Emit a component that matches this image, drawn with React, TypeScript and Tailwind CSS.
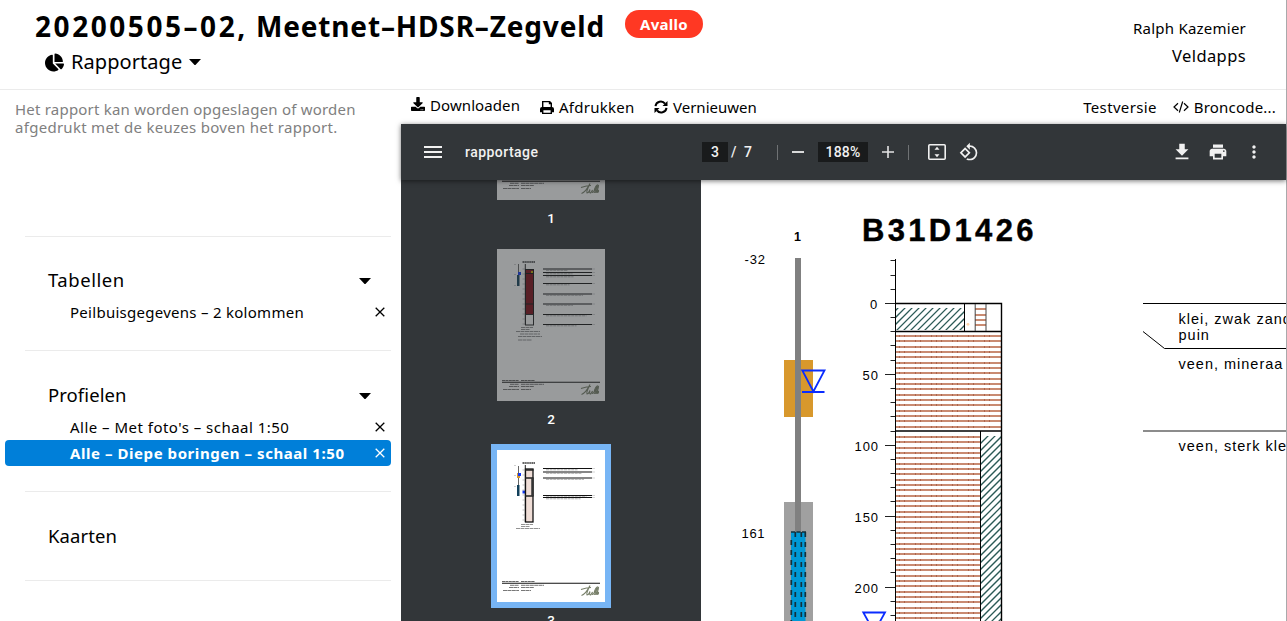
import React from "react";
import { FaChartPie, FaDownload } from "react-icons/fa";
import { MdFileDownload, MdPrint, MdMoreVert, MdRotate90DegreesCcw, MdMenu } from "react-icons/md";

const range = (n: number) => Array.from({ length: n }, (_, i) => i);

function PrintIcon() {
  return (
    <svg viewBox="0 0 14 13" className="h-[13px] w-[14px]" fill="currentColor">
      <path
        fillRule="evenodd"
        d="M2 0h8l2 2v4a2 2 0 0 1 2 2v3.3h-2V13H2v-1.700H0V8a2 2 0 0 1 2-2zM3.400 1.300V6h7.200V3.300H8.800V1.300zM3.400 9.300v2.400h7.200V9.300z"
      />
    </svg>
  );
}

function RefreshIcon() {
  return (
    <svg viewBox="0 0 14 14" className="h-[14px] w-[14px]" fill="none" stroke="currentColor" strokeWidth="2">
      <path d="M1.500 6.200A5.300 5.300 0 0 1 11 3.700" />
      <path d="M12.500 7.800A5.300 5.300 0 0 1 3 10.300" />
      <path d="M13.500 1v5h-5zM.5 13V8h5z" fill="currentColor" stroke="none" />
    </svg>
  );
}

function CodeIcon() {
  return (
    <svg viewBox="0 0 16 12" className="h-[12px] w-[16px]" fill="none" stroke="currentColor" strokeWidth="1.200">
      <path d="M5 2.200 1 6l4 3.800M11 2.200 15 6l-4 3.800M9.700.500 6.300 11.500" />
    </svg>
  );
}

function CloseIcon() {
  return (
    <svg viewBox="0 0 10 10" className="h-[10px] w-[10px]" fill="none" stroke="currentColor" strokeWidth="1.300">
      <path d="M.7.7l8.600 8.600M9.300.7.7 9.300" />
    </svg>
  );
}

function Caret() {
  return (
    <svg viewBox="0 0 12 6" className="h-[6px] w-[12px]" fill="currentColor">
      <path d="M0 0h12L6.700 5.700a1 1 0 0 1-1.400 0z" />
    </svg>
  );
}

function Header() {
  return (
    <header className="flex h-[90px] shrink-0 justify-between border-b border-[#ebebeb] pr-[40px]">
      <div className="pl-[35px]">
        <div className="flex items-start">
          <h1 className="mt-[6px] h-[40px] w-[590px] whitespace-nowrap text-[28px] font-bold leading-[40px]">
            <span className="tracking-[2.550px]">20200505–02,</span>
            <span className="tracking-[0.850px]"> Meetnet–HDSR–Zegveld</span>
          </h1>
          <span className="mt-[10px] flex h-[28px] w-[78px] items-center justify-center rounded-full bg-[#ff3823] text-[15px] font-bold tracking-[0.300px] text-white">
            Avallo
          </span>
        </div>
        <div className="flex h-[32px] items-center pl-[10px]">
          <FaChartPie className="h-[19px] w-[19px]" />
          <span className="ml-[7px] text-[20px] leading-[32px] tracking-[0.060px]">Rapportage</span>
          <span className="ml-[7px] flex"><Caret /></span>
        </div>
      </div>
      <div className="pt-[15px] text-right">
        <div className="text-[15px] leading-[27px] tracking-[0.230px]">Ralph Kazemier</div>
        <div className="text-[16.500px] leading-[28px] tracking-[0.400px]">Veldapps</div>
      </div>
    </header>
  );
}

function Sidebar() {
  return (
    <aside className="flex w-[401px] shrink-0 flex-col">
      <div className="h-[146px] pl-[15px] pt-[10px] text-[15px] leading-[18px] text-[#808080]">
        <p className="whitespace-nowrap tracking-[0.210px]">Het rapport kan worden opgeslagen of worden</p>
        <p className="whitespace-nowrap tracking-[0.280px]">afgedrukt met de keuzes boven het rapport.</p>
      </div>
      <section className="ml-[25px] mr-[10px] h-[114px] border-t border-[#ebebeb] pt-[28px]">
        <div className="flex h-[30px] items-center justify-between pl-[23px] pr-[20px]">
          <h2 className="text-[18.500px] tracking-[0.550px]">Tabellen</h2>
          <span className="mt-[2px]"><Caret /></span>
        </div>
        <div className="mt-[4px] flex h-[26px] items-center justify-between pl-[45px] pr-[6px] text-[15px] tracking-[0.275px]">
          <span>Peilbuisgegevens – 2 kolommen</span>
          <CloseIcon />
        </div>
      </section>
      <section className="ml-[5px] mr-[10px] h-[141px]">
        <div className="ml-[20px] h-[30px] border-t border-[#ebebeb]" />
        <div className="flex h-[30px] items-center justify-between pl-[43px] pr-[20px]">
          <h2 className="text-[18.500px] tracking-[0.070px]">Profielen</h2>
          <span className="mt-[2px]"><Caret /></span>
        </div>
        <div className="mt-[4px] flex h-[26px] items-center justify-between pl-[65px] pr-[6px] text-[15px] tracking-[0.480px]">
          <span>Alle – Met foto's – schaal 1:50</span>
          <CloseIcon />
        </div>
        <div className="flex h-[26px] items-center justify-between rounded-[4px] bg-[#007fd9] pl-[65px] pr-[6px] text-[15px] font-bold tracking-[0.560px] text-white">
          <span>Alle – Diepe boringen – schaal 1:50</span>
          <CloseIcon />
        </div>
      </section>
      <section className="ml-[25px] mr-[10px] h-[90px] border-y border-[#ebebeb] pl-[23px] pt-[29px]">
        <h2 className="text-[18.500px] leading-[30px] tracking-[0.100px]">Kaarten</h2>
      </section>
    </aside>
  );
}

function ReportToolbar() {
  return (
    <div className="flex h-[34px] shrink-0 items-center pl-[10px] pr-[10px] text-[15px] leading-[20px]">
      <span className="mb-[4px] flex w-[129px] items-center gap-[5px] tracking-[0.090px]">
        <FaDownload className="mb-[3px] h-[14px] w-[14px]" />Downloaden
      </span>
      <span className="flex w-[114px] items-center gap-[5px] tracking-[0.250px]"><PrintIcon />Afdrukken</span>
      <span className="flex items-center gap-[5px]"><RefreshIcon />Vernieuwen</span>
      <span className="ml-auto tracking-[0.350px]">Testversie</span>
      <span className="ml-[16px] flex items-center gap-[5px] tracking-[0.200px]"><CodeIcon />Broncode...</span>
    </div>
  );
}

function PdfBar() {
  return (
    <div className="z-10 flex h-[56px] shrink-0 items-center bg-[#323639] font-[Roboto,sans-serif] text-[14px] font-medium text-[#f1f1f1] shadow-[0_1px_5px_rgba(0,0,0,0.55)]">
      <MdMenu className="ml-[20px] h-[24px] w-[24px] text-[#f1f1f1]" />
      <span className="ml-[20px] w-[237px] tracking-[0.450px]">rapportage</span>
      <span className="flex h-[20px] w-[26px] items-center justify-center bg-[#191b1c]">3</span>
      <span className="ml-[3px] w-[13px]">/</span>
      <span className="w-[33px]">7</span>
      <span className="h-[15px] w-px bg-[#6f7274]" />
      <span className="ml-[14px] h-[2px] w-[12px] bg-[#d8d9d9]" />
      <span className="ml-[14px] flex h-[20px] w-[50px] items-center justify-center bg-[#191b1c] tracking-[0.200px]">188%</span>
      <svg viewBox="0 0 12 12" className="ml-[14px] h-[12px] w-[12px]" fill="#e4e4e4"><path d="M5.200 0h1.600v5.200H12v1.600H6.800V12H5.200V6.800H0V5.200h5.200z" /></svg>
      <span className="ml-[14px] h-[15px] w-px bg-[#6f7274]" />
      <svg viewBox="0 0 18 16" className="ml-[19px] h-[16px] w-[18px]" fill="#f1f1f1">
        <rect x=".8" y=".8" width="16.400" height="14.400" rx="1" fill="none" stroke="#f1f1f1" strokeWidth="1.600" />
        <path d="M9 2.800l2.500 3H6.500zM9 13.200l2.500-3H6.500z" />
      </svg>
      <MdRotate90DegreesCcw className="ml-[13px] h-[20px] w-[20px]" />
      <MdFileDownload className="ml-auto h-[22px] w-[22px]" />
      <MdPrint className="ml-[15px] h-[20px] w-[20px]" />
      <MdMoreVert className="ml-[16px] mr-[22px] h-[20px] w-[20px]" />
    </div>
  );
}

const SMALL_LINES = [
  [21, 78.5, 12], [21, 80.5, 9], [16, 82.5, 24], [20, 85, 20], [18, 87.5, 24], [18, 91, 14],
];

function Thumb({ active, variant }: { active?: boolean; variant: "log" | "core" }) {
  const isLog = variant === "log";
  const rows = isLog ? [20, 23.5, 26.5, 34.5, 45, 55, 65.5, 75.5] : [18.5, 22, 28, 45.5, 47.5];
  return (
    <div className={active ? "bg-[#77b5f5] p-[6px]" : "p-[6px]"}>
      <svg viewBox="0 0 108 152" className={active ? "h-[152px] w-[108px]" : "h-[152px] w-[108px] opacity-50"}>
        <rect width="108" height="152" fill="#fff" />
        <path d="M25.500 13h12.500" stroke="#333" strokeWidth="1.600" strokeDasharray="1.500 .4" />
        <path d={isLog ? "M21.500 15v22" : "M21.500 16v30"} stroke="#666" />
        <path d="M17 15.500h2M17 25.500h2M17 36.500h2" stroke="#bbb" strokeWidth=".7" />
        {!isLog && <rect x="20" y="23" width="3" height="5" fill="#d8982c" />}
        <rect x="21" y="23" width="3" height="3" fill="#1238f0" />
        <rect x="20" y={isLog ? 26 : 35} width="2.500" height="11" fill="#12405a" />
        {!isLog && <rect x="25.500" y="40.500" width="3" height="3" fill="#1238f0" />}
        <path d={isLog ? "M28.300 15v61" : "M28.300 15v57"} stroke="#222" />
        {isLog ? (
          <>
            <rect x="28.500" y="20.500" width="8" height="45" fill="#7e0a14" stroke="#111" />
            <rect x="34" y="22" width="2" height="2" fill="#c2b000" />
            <path d="M28 20.500h8.500M28 24.500h8.500M28 55h8.500" stroke="#111" />
            <rect x="28.500" y="65.500" width="8" height="10.500" fill="#fff" stroke="#222" />
          </>
        ) : (
          <>
            <rect x="28.500" y="19" width="7.500" height="53" fill="#efddd6" stroke="#111" strokeWidth="1.300" />
            <path d="M28 20h8.500M28 28h8.500M28 46h8.500" stroke="#222" strokeWidth="1.600" />
            <path d="M35.500 28v18" stroke="#333" strokeWidth="2.500" />
          </>
        )}
        {range(isLog ? 12 : 11).map((i) => (
          <path key={i} d={`M25.500 ${20 + i * 5}h2.500`} stroke="#999" strokeWidth=".6" />
        ))}
        {rows.map((y) => (
          <g key={y}>
            <path d={`M46 ${y}h49`} stroke="#111" strokeWidth="1.200" />
            <path d={`M49 ${y + 1.3}h${22 + ((y * 7) % 20)}`} stroke="#777" strokeWidth=".6" strokeDasharray="3 .6" />
            <path d={`M95 ${y}h3`} stroke="#bbb" strokeWidth=".6" />
          </g>
        ))}
        {SMALL_LINES.slice(0, isLog ? 6 : 3).map(([x, y, w], i) => (
          <path key={i} d={`M${x + 3} ${isLog ? y : 74.5 + i * 2}h${w}`} stroke="#777" strokeWidth=".8" strokeDasharray="4 .5" />
        ))}
        <path d="M5 131.500h17M24 131.500h14" stroke="#555" strokeWidth=".9" strokeDasharray="3 .4" />
        <path d="M5 133.200h98" stroke="#111" strokeWidth="1.100" />
        <path d="M13 135.300h9M24 135.300h23M12 137.500h10M24 137.500h13M6 140.500h16M24 140.500h10" stroke="#555" strokeWidth=".8" strokeDasharray="4 .4" />
        <path
          d="M84.500 145.500c3-1 6-5 8.500-10-2 4-4 8-3 9.500 2 0 2-2 3-3.500-1 3 0 4 1 3l1.500-2.500c-1 2.500 0 3 1.200 1.500 2-2 3.500-5 3.500-6.500-2 1-4 7-2.700 7.500 2 0 4-5 4-7-2 1-3.500 6.500-2.500 7 2 0 1-2.500 2-2.500s.500 2.500-.700 2.500M84 139.500c3-1 7-2 10-2"
          fill="none"
          stroke="#78806a"
          strokeWidth="1.100"
        />
      </svg>
    </div>
  );
}

function Thumbs() {
  const pages: { n: number; variant: "log" | "core"; active?: boolean }[] = [
    { n: 1, variant: "log" },
    { n: 2, variant: "log" },
    { n: 3, variant: "core", active: true },
  ];
  return (
    <div className="flex w-[300px] shrink-0 flex-col items-center overflow-hidden bg-[#323639]">
      <div className="-mt-[138px] flex shrink-0 flex-col gap-[13px]">
        {pages.map((p) => (
          <div key={p.n} className="flex shrink-0 flex-col">
            <Thumb variant={p.variant} active={p.active} />
            <span className="h-[24px] text-center font-[Roboto,sans-serif] text-[13.500px] font-medium leading-[25px] text-white">{p.n}</span>
          </div>
        ))}
      </div>
    </div>
  );
}

const DASH_X = [899, 904, 915, 920, 931, 936, 941, 952, 957, 968, 973, 984, 989];

function PeatLines({ x, y, w, n }: { x: number; y: number; w: number; n: number }) {
  return (
    <g shapeRendering="crispEdges">
      {range(n).map((i) => {
        const top = Math.round(y + i * 5.33);
        return (
          <g key={i}>
            <rect x={x} y={top} width={w} height={2} fill="#c98b72" />
            {DASH_X.filter((d) => d < x + w).map((d) => (
              <rect key={d} x={d} y={top} width={1} height={2} fill="#ac654c" />
            ))}
          </g>
        );
      })}
    </g>
  );
}

function BoringPage() {
  return (
    <svg viewBox="701 180 585 441" className="h-[441px] w-[585px] shrink-0 bg-white font-['Liberation_Sans',Arial,sans-serif]">
      <defs>
        <clipPath id="clayTop"><rect x="896" y="308" width="68" height="22" /></clipPath>
        <clipPath id="claySide"><rect x="981" y="436" width="20" height="190" /></clipPath>
      </defs>
      <text x="794" y="241" fontSize="12.500" fontWeight="700">1</text>
      <text x="862" y="241" fontSize="31" fontWeight="700" textLength="171.500" lengthAdjust="spacing" stroke="#000" strokeWidth=".4">B31D1426</text>
      <g fontSize="13">
        <text x="744.500" y="264" textLength="20.500">-32</text>
        <text x="741.500" y="538" textLength="23">161</text>
        <text x="870" y="309">0</text>
        <text x="862.500" y="380" textLength="15.500">50</text>
        <text x="854.500" y="451" textLength="23.500">100</text>
        <text x="854.500" y="522" textLength="23.500">150</text>
        <text x="854.500" y="593" textLength="23.500">200</text>
      </g>

      <rect x="784" y="360" width="29" height="57" fill="#d8982c" />
      <rect x="784" y="502" width="29" height="120" fill="#a0a0a0" />
      <rect x="795" y="258" width="6" height="274" fill="#808080" />
      <rect x="791" y="532" width="14.500" height="90" fill="#0099d6" />
      <g fill="none" stroke="#12303c">
        <path d="M791 532h15" strokeWidth="1.500" strokeDasharray="4 1.500" />
        <path d="M791.300 540v90M805.300 532v90" strokeWidth="1.700" strokeDasharray="5 5" />
        <path d="M795.300 532v90M801.300 532v90" strokeWidth="1.700" strokeDasharray="5 5" />
      </g>
      <g fill="none" stroke="#0a2cff" strokeWidth="1.800">
        <path d="M802.300 370.500h22.200L813.400 391.500zM802 392h22.500" />
        <path d="M863.300 612.500h21.700L874.200 632z" />
      </g>

      <g clipPath="url(#clayTop)" stroke="#2b5a56" strokeWidth="1.250">
        {range(14).map((i) => <path key={i} d={`M${875 + i * 7} 331l24-24`} />)}
      </g>
      <g clipPath="url(#claySide)" stroke="#2b5a56" strokeWidth="1.250">
        {range(34).map((i) => <path key={i} d={`M980 ${444 + i * 7}l22-22`} />)}
      </g>
      <PeatLines x={896} y={335} w={105} n={18} />
      <PeatLines x={896} y={436} w={84} n={35} />
      <g fill="#c98b72">
        <rect x="975" y="308" width="11" height="2" />
        <rect x="975" y="314" width="11" height="2" />
        <rect x="975" y="319" width="11" height="2" />
        <rect x="975" y="324" width="11" height="2" />
      </g>
      <circle cx="968" cy="324.300" r="1.400" fill="#ffd3a8" />

      <g stroke="#000" fill="none" strokeWidth="1">
        <path d="M895.500 259v370" />
        {range(26).map((i) => {
          const major = i % 5 === 3;
          const y = Math.floor(260.9 + i * 14.18) + 0.5;
          return <path key={i} d={`M${major ? 885 : 890.5} ${y}H895`} stroke="#222" />;
        })}
        <path d="M895 303.500h106.500V622M895 331.500h107M895 431h107" strokeWidth="1.400" />
        <path d="M964.500 303v28M980.500 431v192" />
        <path d="M975.200 304v27M986 304v27" stroke="#444" />
      </g>

      <g stroke="#000" fill="none">
        <path d="M1143 303.500h144" />
        <path d="M1143 331.500 1164.500 348.500H1287" />
        <path d="M1143 431h144" stroke="#666" strokeWidth="1.500" />
      </g>
      <g fontSize="14.500" letterSpacing="1">
        <text x="1178.500" y="324">klei, zwak zand</text>
        <text x="1178.500" y="340">puin</text>
        <text x="1178.500" y="369">veen, mineraa</text>
        <text x="1178.500" y="451">veen, sterk kle</text>
      </g>
    </svg>
  );
}

export default function App() {
  return (
    <div className="flex h-[621px] w-[1287px] overflow-hidden bg-white font-['Noto_Sans',sans-serif] text-black">
      <div className="flex w-[1286px] shrink-0 flex-col">
        <Header />
        <div className="flex min-h-0 flex-1">
          <Sidebar />
          <main className="flex w-[885px] shrink-0 flex-col">
            <ReportToolbar />
            <PdfBar />
            <div className="flex min-h-0 flex-1 overflow-hidden">
              <Thumbs />
              <BoringPage />
            </div>
          </main>
        </div>
      </div>
      <div className="w-px bg-[#a9a9ab]" />
    </div>
  );
}
